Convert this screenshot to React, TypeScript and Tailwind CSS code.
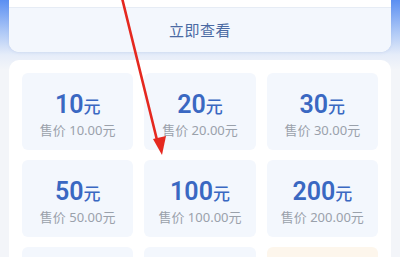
import React from "react";

const items = [
  { v: "10", p: "10.00" },
  { v: "20", p: "20.00" },
  { v: "30", p: "30.00" },
  { v: "50", p: "50.00" },
  { v: "100", p: "100.00" },
  { v: "200", p: "200.00" },
];

export default function App() {
  return (
    <div
      className="relative w-[400px] h-[257px] overflow-hidden bg-[linear-gradient(180deg,#5b8ff2_0px,#a9c5f6_30px,#e6edf9_55px,#f3f5f9_70px)]"
      style={{ fontFamily: '"Noto Sans", "Noto Sans CJK SC", sans-serif' }}
    >
      <div className="mx-[9px] rounded-b-[10px] bg-white overflow-hidden shadow-[0_1px_3px_rgba(120,150,200,0.15)]">
        <div className="h-[7px] bg-white" />
        <div className="h-[45px] border-t border-[#e6ecf5] bg-[#f3f7fd] flex items-center justify-center">
          <span className="text-[15px] text-[#4a6aa3] tracking-[0.5px]">立即查看</span>
        </div>
      </div>
      <div className="mx-[9px] mt-[8px] rounded-[10px] bg-white pt-[13px] px-[13px] pb-[10px] grid grid-cols-3 gap-x-[11px] gap-y-[10px]">
        {items.map((it) => (
          <div
            key={it.v}
            className="h-[77px] rounded-[6px] bg-[#f3f7fd] flex flex-col items-center justify-center pt-[5px]"
          >
            <div className="flex items-baseline text-[#3a68c2] leading-none">
              <span className="text-[25px] font-semibold" style={{ fontFamily: 'Roboto, "Noto Sans", sans-serif' }}>{it.v}</span>
              <span className="text-[17px] font-medium">元</span>
            </div>
            <div className="mt-[7px] text-[13px] leading-none text-[#9aa1ab]">
              售价 {it.p}元
            </div>
          </div>
        ))}
        <div className="h-[77px] rounded-[6px] bg-[#f3f7fd]" />
        <div className="h-[77px] rounded-[6px] bg-[#f3f7fd]" />
        <div className="h-[77px] rounded-[6px] bg-[#fdf6ec]" />
      </div>
      <svg className="absolute left-0 top-0" width="400" height="257" viewBox="0 0 400 257">
        <line x1="122" y1="-2" x2="157" y2="140" stroke="#e5281f" strokeWidth="2.6" strokeLinecap="round" />
        <polygon points="153,139 166,136 162,155" fill="#e5281f" />
      </svg>
    </div>
  );
}
